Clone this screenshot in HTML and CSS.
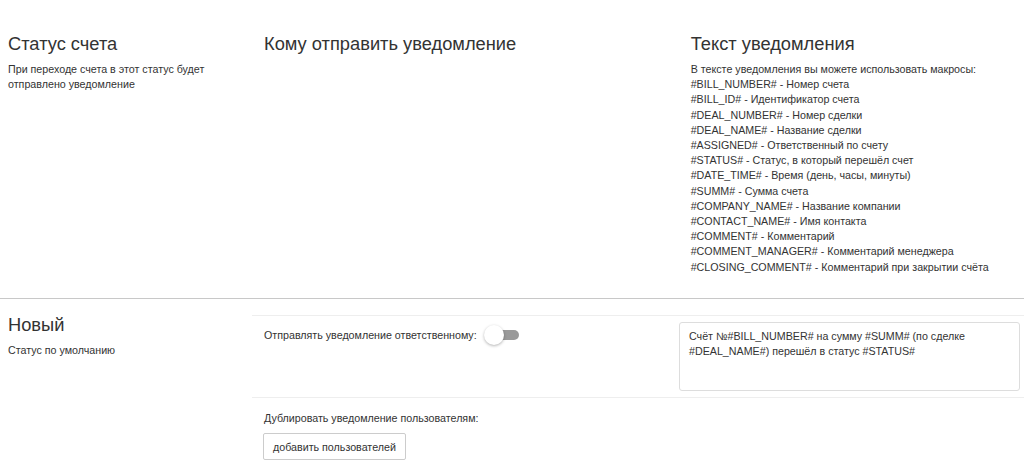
FILE: index.html
```html
<!DOCTYPE html>
<html lang="ru">
<head>
  <meta charset="UTF-8">
  <meta name="viewport" content="width=device-width, initial-scale=1.0">
  <title>Уведомления о статусе счета</title>
  <link rel="stylesheet" href="styles.css">
</head>
<body>
  <!-- Заголовок таблицы -->
  <div class="head-row">
    <div class="col-status">
      <h2>Статус счета</h2>
      <p>При переходе счета в этот статус будет<br>отправлено уведомление</p>
    </div>
    <div class="col-who">
      <h2>Кому отправить уведомление</h2>
    </div>
    <div class="col-text">
      <h2>Текст уведомления</h2>
      <p>
        В тексте уведомления вы можете использовать макросы:<br>
        #BILL_NUMBER# - Номер счета<br>
        #BILL_ID# - Идентификатор счета<br>
        #DEAL_NUMBER# - Номер сделки<br>
        #DEAL_NAME# - Название сделки<br>
        #ASSIGNED# - Ответственный по счету<br>
        #STATUS# - Статус, в который перешёл счет<br>
        #DATE_TIME# - Время (день, часы, минуты)<br>
        #SUMM# - Сумма счета<br>
        #COMPANY_NAME# - Название компании<br>
        #CONTACT_NAME# - Имя контакта<br>
        #COMMENT# - Комментарий<br>
        #COMMENT_MANAGER# - Комментарий менеджера<br>
        #CLOSING_COMMENT# - Комментарий при закрытии счёта
      </p>
    </div>
  </div>

  <!-- Статус: Новый -->
  <div class="status-row">
    <div class="status-name">
      <h2>Новый</h2>
      <p>Статус по умолчанию</p>
    </div>
    <div class="status-body">
      <div class="sub-row">
        <div class="who">
          <label class="switch-label">
            Отправлять уведомление ответственному:
            <span class="switch"><span class="knob"></span></span>
          </label>
        </div>
        <div class="msg">
          <textarea class="msg-text">Счёт №#BILL_NUMBER# на сумму #SUMM# (по сделке #DEAL_NAME#) перешёл в статус #STATUS#</textarea>
        </div>
      </div>
      <div class="sub-row last">
        <div class="who">
          <p>Дублировать уведомление пользователям:</p>
          <button class="btn">добавить пользователей</button>
        </div>
      </div>
    </div>
  </div>
</body>
</html>
```

FILE: styles.css
```css
body {
  margin: 0;
  font-family: "Liberation Sans", Arial, sans-serif;
  color: #333;
  background: #fff;
}

h2 {
  margin: 0;
  font-size: 18.3px;
  font-weight: normal;
  line-height: 24px;
}

p {
  margin: 0;
  font-size: 10.7px;
  line-height: 15.2px;
}

.head-row {
  display: flex;
  padding: 32px 0 23px;
  border-bottom: 1px solid #c8c8c8;
}

.col-status {
  width: 25%;
  padding: 0 8px;
  box-sizing: border-box;
}

.col-who {
  width: 41.667%;
  padding: 0 8px;
  box-sizing: border-box;
}

.col-text {
  width: 33.333%;
  padding: 0 8px;
  box-sizing: border-box;
}

.head-row h2 {
  margin-bottom: 6px;
}

.status-row {
  display: flex;
}

.status-name {
  width: 252px;
  padding: 14px 8px 0;
  box-sizing: border-box;
}

.status-name h2 {
  margin-bottom: 6px;
}

.status-body {
  flex: 1;
  margin-top: 16px;
  border-top: 1px solid #eee;
}

.sub-row {
  display: flex;
  padding: 6px 4px 6px 12px;
  border-bottom: 1px solid #eee;
}

.sub-row.last {
  border-bottom: none;
  padding-top: 13px;
  padding-left: 11px;
}

.sub-row.last p {
  padding-left: 1px;
}

.who {
  width: 415px;
}

.msg {
  flex: 1;
}

.switch-label {
  display: flex;
  align-items: center;
  font-size: 10.7px;
  height: 21px;
  margin-top: 3px;
}

.switch {
  position: relative;
  width: 35px;
  height: 20px;
  margin-left: 7px;
}

.switch::before {
  content: "";
  position: absolute;
  left: 6px;
  right: 0;
  top: 5px;
  height: 10px;
  border-radius: 5px;
  background: #9a9a9a;
}

.knob {
  position: absolute;
  left: 0;
  top: 0;
  width: 20px;
  height: 20px;
  border-radius: 50%;
  background: #fff;
  box-shadow: 0 1px 3px rgba(0, 0, 0, 0.3);
}

.msg-text {
  display: block;
  width: 100%;
  height: 69px;
  box-sizing: border-box;
  padding: 6px 9px;
  border: 1px solid #ddd;
  border-radius: 3px;
  font-family: "Liberation Sans", Arial, sans-serif;
  font-size: 10.7px;
  line-height: 15.2px;
  color: #333;
  resize: none;
}

.btn {
  margin-top: 7px;
  height: 27px;
  padding: 0 9px;
  background: #fff;
  border: 1px solid #ccc;
  border-radius: 2px;
  font-family: "Liberation Sans", Arial, sans-serif;
  font-size: 10.7px;
  color: #333;
}
```
